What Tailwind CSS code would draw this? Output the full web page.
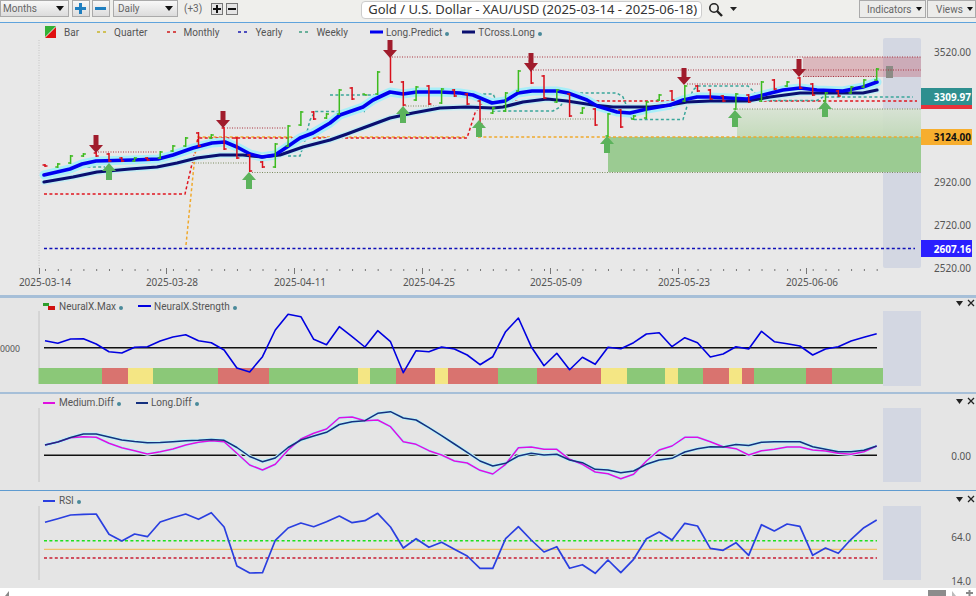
<!DOCTYPE html>
<html lang="en">
<head>
    <meta charset="UTF-8">
    <title>Gold / U.S. Dollar - XAU/USD</title>
    <script src="https://cdn.jsdelivr.net/npm/@tailwindcss/browser@4"></script>
</head>
<body class="w-[976px] h-[596px] overflow-hidden bg-white flex flex-col font-['Roboto',sans-serif] text-[10px] text-[#555]">

    <!-- toolbar -->
    <div class="h-[23px] shrink-0 flex items-start bg-[#efefec] border-b border-[#5fa3dc] text-[#666]">
        <div class="w-[69px] h-[17px] flex items-center justify-between pl-[2px] pr-[4px] border border-[#aaa] bg-linear-to-b from-[#f8f8f8] to-[#dcdcdc]">
            Months
            <svg width="8" height="5"><polygon points="0,0 8,0 4,5" fill="#111"/></svg>
        </div>
        <div class="w-[18px] h-[17px] ml-[3px] flex items-center justify-center border border-[#aaa] bg-linear-to-b from-[#f8f8f8] to-[#dcdcdc]">
            <svg width="11" height="11"><path d="M5.5 0V11M0 5.5H11" stroke="#1f7fc0" stroke-width="3"/></svg>
        </div>
        <div class="w-[18px] h-[17px] ml-[2px] flex items-center justify-center border border-[#aaa] bg-linear-to-b from-[#f8f8f8] to-[#dcdcdc]">
            <svg width="11" height="11"><path d="M0 5.5H11" stroke="#1f7fc0" stroke-width="3"/></svg>
        </div>
        <div class="w-[65px] h-[17px] ml-[3px] flex items-center justify-between pl-[4px] pr-[4px] border border-[#aaa] bg-linear-to-b from-[#f8f8f8] to-[#dcdcdc]">
            Daily
            <svg width="8" height="5"><polygon points="0,0 8,0 4,5" fill="#111"/></svg>
        </div>
        <span class="ml-[6px] h-[17px] leading-[17px]">(+3)</span>
        <div class="w-[12px] h-[12px] ml-[9px] mt-[3px] flex items-center justify-center border border-[#777] bg-[#e4e4e4]">
            <svg width="8" height="8"><path d="M4 0V8M0 4H8" stroke="#111" stroke-width="2"/></svg>
        </div>
        <div class="w-[12px] h-[12px] ml-[3px] mt-[3px] flex items-center justify-center border border-[#777] bg-[#e4e4e4]">
            <svg width="8" height="8"><path d="M0 4H8" stroke="#111" stroke-width="2"/></svg>
        </div>
        <div class="w-[341px] h-[18px] ml-[123px] mt-px flex items-center pl-[6px] rounded-sm border border-[#ccc] bg-white font-['Noto_Sans',sans-serif] text-[13px] text-[#333] whitespace-nowrap">Gold / U.S. Dollar - XAU/USD (2025-03-14 - 2025-06-18)</div>
        <svg class="ml-[6px] mt-[2px]" width="15" height="15" viewBox="0 0 15 15"><circle cx="6" cy="6" r="4.2" fill="none" stroke="#222" stroke-width="1.6"/><path d="M9 9L14 14" stroke="#222" stroke-width="2.4"/></svg>
        <svg class="ml-[7px] mt-[7px]" width="7" height="4"><polygon points="0,0 7,0 3.5,4" fill="#222"/></svg>
        <div class="w-[67px] h-[18px] ml-[122px] flex items-center justify-between pl-[7px] pr-[3px] border border-[#aaa] bg-[#ececea]">
            Indicators
            <svg width="6" height="4"><polygon points="0,0 6,0 3,4" fill="#111"/></svg>
        </div>
        <div class="w-[49px] h-[18px] ml-px flex items-center justify-between pl-[8px] pr-[2px] border border-[#aaa] bg-[#ececea]">
            Views
            <svg width="6" height="4"><polygon points="0,0 6,0 3,4" fill="#111"/></svg>
        </div>
    </div>

    <!-- price pane -->
    <div class="relative h-[275px] shrink-0 bg-[#e8e8e8] border-b-[3px] border-[#a6bfd8]">
        <div class="absolute left-[45px] top-[2px] h-[14px] flex items-center whitespace-nowrap">
            <svg width="12" height="12"><polygon points="0,0 11,0 0,11" fill="#35b035"/><polygon points="11,1 11,12 0,12" fill="#e01010"/></svg>
            <span class="ml-[7px]">Bar</span>
            <svg class="ml-[18px]" width="11" height="2"><path d="M0 1H11" stroke="#c8b428" stroke-width="1.5" stroke-dasharray="3 3"/></svg>
            <span class="ml-[6px]">Quarter</span>
            <svg class="ml-[19px]" width="11" height="2"><path d="M0 1H11" stroke="#d01818" stroke-width="1.5" stroke-dasharray="3 3"/></svg>
            <span class="ml-[6px]">Monthly</span>
            <svg class="ml-[19px]" width="11" height="2"><path d="M0 1H11" stroke="#1818b0" stroke-width="1.5" stroke-dasharray="3 3"/></svg>
            <span class="ml-[6px]">Yearly</span>
            <svg class="ml-[17px]" width="11" height="2"><path d="M0 1H11" stroke="#3f9d80" stroke-width="1.5" stroke-dasharray="3 3"/></svg>
            <span class="ml-[6px]">Weekly</span>
            <svg class="ml-[22px]" width="13" height="4"><path d="M0 2H13" stroke="#0000f0" stroke-width="3"/></svg>
            <span class="ml-[3px]">Long.Predict</span>
            <span class="ml-[3px] mt-[3px] w-[4px] h-[4px] rounded-full bg-[#4a8a9a]"></span>
            <svg class="ml-[13px]" width="13" height="4"><path d="M0 2H13" stroke="#0a0f70" stroke-width="3"/></svg>
            <span class="ml-[3px]">TCross.Long</span>
            <span class="ml-[3px] mt-[3px] w-[4px] h-[4px] rounded-full bg-[#4a8a9a]"></span>
        </div>
        <svg id="price" class="block font-['Noto_Sans',sans-serif]" width="976" height="272" viewBox="0 23 976 272">
            <defs>
                <linearGradient id="fade" x1="0" y1="0" x2="0" y2="1">
                    <stop offset="0" stop-color="#d7e3d2"/>
                    <stop offset="1" stop-color="#c0d9b6"/>
                </linearGradient>
            </defs>
            <rect x="883" y="38" width="38" height="230" rx="2" fill="#d3d7e2"/>
            <rect x="803" y="57" width="118" height="20" fill="#b8283c" fill-opacity=".25"/>
            <rect x="737" y="109" width="184" height="28" fill="url(#fade)" fill-opacity=".9"/>
            <rect x="608" y="137" width="313" height="35" fill="#9bcb92"/>
            <rect x="886" y="66" width="7" height="12" fill="#8b8b85"/>
            <path d="M39 40V270" stroke="#c4c4c4" stroke-dasharray="1 1.5"/>

            <!-- pivots -->
            <g fill="none" stroke="#a8333f" stroke-dasharray="1 1.5">
                <path d="M98 152H158M227 128H287M392 57H921M533 70H921M687 84H760M803 76.500H877"/>
            </g>
            <g fill="none" stroke="#7c8c60" stroke-dasharray="1 1.5">
                <path d="M193 163H247M252 172.500H921M403 106H463M480 119H597M737 109H921"/>
            </g>

            <!-- levels -->
            <g fill="none" stroke-width="1.5" stroke-dasharray="3 2.400">
                <path d="M186 245L195 155L198 137H467M478 137H919" stroke="#f0a92c"/>
                <path d="M44 194H185L198 138H467L475 113L484 101H917" stroke="#e0141e"/>
                <path d="M44 248.500H915" stroke="#1010b8"/>
                <path d="M82 167H105M288 156H300L305 140L310 120L315 111.500H365M330 95H375M467 94H493L496 100L493 111H553L560 107L568 93H617L623 97L632 119.500H683L688 103L693 90L698 86H748L755 93L763 100.500H817L823 97H913" stroke="#3aa69a"/>
            </g>

            <g id="lines" fill="none" stroke-linejoin="round" stroke-linecap="round"></g>
            <g id="bars" fill="none" stroke-width="1.500"></g>

            <!-- signal arrows -->
            <g fill="#a01c2c">
                <polygon points="93.500,135 98.500,135 98.500,145 103,145 96,153 89,145 93.500,145"/>
                <polygon points="220.500,111 225.500,111 225.500,120 230,120 223,128 216,120 220.500,120"/>
                <polygon points="387.500,40 392.500,40 392.500,50 397,50 390,58 383,50 387.500,50"/>
                <polygon points="528.500,53 533.500,53 533.500,63 538,63 531,72 524,63 528.500,63"/>
                <polygon points="681.500,68 686.500,68 686.500,77 691,77 684,85 677,77 681.500,77"/>
                <polygon points="796.500,59 801.500,59 801.500,69 806,69 799,77 792,69 796.500,69"/>
            </g>
            <g fill="#5cb35c">
                <polygon points="109,163 116,171 112,171 112,180 106,180 106,171 102,171"/>
                <polygon points="249,172 256,180 252,180 252,189 246,189 246,180 242,180"/>
                <polygon points="403,106 410,114 406,114 406,123 400,123 400,114 396,114"/>
                <polygon points="479,120 486,128 482,128 482,137 476,137 476,128 472,128"/>
                <polygon points="607,136 614,144 610,144 610,153 604,153 604,144 600,144"/>
                <polygon points="735,110 742,118 738,118 738,127 732,127 732,118 728,118"/>
                <polygon points="825,101 832,109 828,109 828,117 822,117 822,109 818,109"/>
            </g>

            <!-- axes -->
            <g id="ticks" fill="#777"></g>
            <g font-size="10" fill="#555" text-anchor="middle">
                <text x="45" y="286">2025-03-14</text>
                <text x="172" y="286">2025-03-28</text>
                <text x="300" y="286">2025-04-11</text>
                <text x="429" y="286">2025-04-25</text>
                <text x="556" y="286">2025-05-09</text>
                <text x="684" y="286">2025-05-23</text>
                <text x="812" y="286">2025-06-06</text>
            </g>
            <rect x="921" y="88" width="51" height="17" fill="#2e8f8f"/>
            <rect x="921" y="105" width="51" height="4" fill="#e8333b"/>
            <rect x="921" y="129" width="51" height="16" fill="#f7ae2e"/>
            <rect x="921" y="240" width="51" height="17" fill="#2a1fff"/>
            <g font-size="10" fill="#555" text-anchor="end">
                <text x="971" y="56">3520.00</text>
                <text x="971" y="186">2920.00</text>
                <text x="971" y="229">2720.00</text>
                <text x="971" y="272">2520.00</text>
                <text x="971" y="101" fill="#fff" font-weight="700">3309.97</text>
                <text x="971" y="141" fill="#111" font-weight="700">3124.00</text>
                <text x="971" y="253" fill="#fff" font-weight="700">2607.16</text>
            </g>
        </svg>
    </div>

    <!-- NeuralX pane -->
    <div class="relative h-[96px] shrink-0 bg-[#e5e5e5] border-b-[2px] border-[#a6bfd8]">
        <div class="absolute left-[43px] top-px h-[14px] flex items-center whitespace-nowrap">
            <svg width="12" height="7"><rect y="0" width="6" height="3" fill="#2e9e2e"/><rect x="5" y="3" width="7" height="4" fill="#d01010"/></svg>
            <span class="ml-[4px]">NeuralX.Max</span>
            <span class="ml-[3px] mt-[3px] w-[4px] h-[4px] rounded-full bg-[#4a8a9a]"></span>
            <svg class="ml-[15px]" width="13" height="2"><path d="M0 1H13" stroke="#0000e0" stroke-width="2"/></svg>
            <span class="ml-[3px]">NeuralX.Strength</span>
            <span class="ml-[3px] mt-[3px] w-[4px] h-[4px] rounded-full bg-[#4a8a9a]"></span>
        </div>
        <div class="absolute right-[1px] top-[1px] flex items-center gap-[4px]">
            <svg width="7" height="5"><polygon points="0,0 7,0 3.500,5" fill="#222"/></svg>
            <svg width="8" height="8"><path d="M1 1L7 7M7 1L1 7" stroke="#222" stroke-width="1.300"/></svg>
        </div>
        <svg id="neural" class="block font-['Noto_Sans',sans-serif]" width="976" height="94" viewBox="0 298 976 94">
            <rect x="883" y="311" width="38" height="75" fill="#d3d7e2"/>
            <path d="M39 311V368" stroke="#c4c4c4"/>
            <g id="band"></g>
            <path d="M44 347.700H877" stroke="#111" stroke-width="1.500"/>
            <g id="neuralLine" fill="none"></g>
            <text x="20" y="351.500" font-size="8.700" fill="#555" text-anchor="end">0000</text>
        </svg>
    </div>

    <!-- Diff pane -->
    <div class="relative h-[97px] shrink-0 bg-[#e5e5e5] border-b border-[#5f9bd0]">
        <div class="absolute left-[43px] top-px h-[15px] flex items-center whitespace-nowrap">
            <svg width="12" height="2"><path d="M0 1H12" stroke="#e010e0" stroke-width="2"/></svg>
            <span class="ml-[4px]">Medium.Diff</span>
            <span class="ml-[3px] mt-[3px] w-[4px] h-[4px] rounded-full bg-[#4a8a9a]"></span>
            <svg class="ml-[15px]" width="12" height="2"><path d="M0 1H12" stroke="#15307f" stroke-width="2"/></svg>
            <span class="ml-[3px]">Long.Diff</span>
            <span class="ml-[3px] mt-[3px] w-[4px] h-[4px] rounded-full bg-[#4a8a9a]"></span>
        </div>
        <div class="absolute right-[1px] top-[3px] flex items-center gap-[4px]">
            <svg width="7" height="5"><polygon points="0,0 7,0 3.500,5" fill="#222"/></svg>
            <svg width="8" height="8"><path d="M1 1L7 7M7 1L1 7" stroke="#222" stroke-width="1.300"/></svg>
        </div>
        <svg id="diff" class="block font-['Noto_Sans',sans-serif]" width="976" height="96" viewBox="0 394 976 96">
            <rect x="883" y="408" width="38" height="74" fill="#d3d7e2"/>
            <path d="M39 408V482" stroke="#c4c4c4"/>
            <path d="M44 455.300H877" stroke="#111" stroke-width="1.500"/>
            <g id="diffLines" fill="none"></g>
            <text x="971" y="460" font-size="10" fill="#555" text-anchor="end">0.00</text>
        </svg>
    </div>

    <!-- RSI pane -->
    <div class="relative h-[97px] shrink-0 bg-[#e5e5e5]">
        <div class="absolute left-[43px] top-[2px] h-[15px] flex items-center whitespace-nowrap">
            <svg width="12" height="2"><path d="M0 1H12" stroke="#2a3fe0" stroke-width="2"/></svg>
            <span class="ml-[4px]">RSI</span>
            <span class="ml-[3px] mt-[3px] w-[4px] h-[4px] rounded-full bg-[#4a8a9a]"></span>
        </div>
        <div class="absolute right-[1px] top-[4px] flex items-center gap-[4px]">
            <svg width="7" height="5"><polygon points="0,0 7,0 3.500,5" fill="#222"/></svg>
            <svg width="8" height="8"><path d="M1 1L7 7M7 1L1 7" stroke="#222" stroke-width="1.300"/></svg>
        </div>
        <svg id="rsi" class="block font-['Noto_Sans',sans-serif]" width="976" height="97" viewBox="0 491 976 97">
            <rect x="883" y="506" width="38" height="74" fill="#d3d7e2"/>
            <path d="M39 506V580" stroke="#c4c4c4"/>
            <path d="M44 540.700H877" stroke="#1fe01f" stroke-width="1.500" stroke-dasharray="3 2.400"/>
            <path d="M44 549.300H877" stroke="#f2b84a"/>
            <path d="M44 558H877" stroke="#c81e32" stroke-width="1.500" stroke-dasharray="3 2.400"/>
            <g id="rsiLine" fill="none"></g>
            <g font-size="10" fill="#555" text-anchor="end">
                <text x="971" y="541">64.0</text>
                <text x="971" y="585">14.0</text>
            </g>
        </svg>
    </div>

    <!-- scroll bar -->
    <div class="h-[8px] shrink-0 bg-white flex items-end pl-[5px] pr-[3px]">
        <svg width="4" height="5"><polygon points="4,0 4,5 0,5" fill="#888"/></svg>
        <div class="w-[18px] h-[6px] ml-[919px] bg-[#8c8c8c]"></div>
        <svg class="ml-[6px]" width="4" height="5"><polygon points="0,0 4,5 0,5" fill="#bbb"/></svg>
        <svg class="ml-[10px]" width="7" height="6"><path d="M3.500 0V6M0 3H7" stroke="#888" stroke-width="2"/></svg>
    </div>

    <script>
        const NS = "http://www.w3.org/2000/svg";
        const xAt = i => 45 + 12.795 * i;

        function add(parent, tag, attrs) {
            const el = document.createElementNS(NS, tag);
            for (const k in attrs) el.setAttribute(k, attrs[k]);
            parent.appendChild(el);
        }

        // series given per bar
        function series(parent, ys, stroke, width) {
            const pts = ys.map((y, i) => xAt(i).toFixed(1) + "," + y).join(" ");
            add(parent, "polyline", { points: pts, stroke: stroke, "stroke-width": width, "stroke-linejoin": "round" });
        }

        // [top, bottom, up?]
        const bars = [
            [164,167,0],[163,168,1],[155,164,1],[153,157,1],[152,157,0],[153,162,0],[157,162,0],[157,162,1],[157,161,0],[151,159,1],
            [145,152,1],[137,147,1],[132,147,0],[134,139,1],[127,150,0],[137,159,0],[154,172,0],[161,168,0],[143,168,1],[125,147,1],
            [111,126,1],[111,120,0],[113,119,1],[89,115,1],[87,100,0],[94,95,1],[71,95,1],[50,83,0],[81,106,0],[86,101,1],
            [85,105,0],[88,104,1],[89,97,0],[93,105,0],[100,125,0],[107,114,1],[92,112,1],[70,92,1],[60,84,0],[75,99,0],
            [89,103,1],[93,117,0],[107,114,1],[108,126,0],[113,137,1],[109,128,0],[115,120,1],[101,119,1],[94,101,1],[90,101,0],
            [85,102,1],[85,92,0],[89,100,0],[95,102,0],[93,110,1],[94,103,0],[81,102,1],[79,90,0],[81,87,1],[77,89,0],
            [83,96,0],[92,102,1],[90,97,0],[86,94,1],[79,88,1],[68,81,1]
        ];
        const barsG = document.getElementById("bars");
        bars.forEach((b, i) => {
            const x = xAt(i).toFixed(1);
            const open = b[2] ? b[1] - 1 : b[0] + 1;
            const close = b[2] ? b[0] + 1 : b[1] - 1;
            const d = `M${x} ${b[0]}V${b[1]}M${x - 2.5} ${open}H${x}M${x} ${close}H${+x + 2.5}`;
            add(barsG, "path", { d: d, stroke: b[2] ? "#3dbb1e" : "#d8101c" });
        });

        const linesG = document.getElementById("lines");
        const predict = "44,175 57,172 70,169 82,164 96,161 133,160 158,159 173,155 193,148 212,143 225,142 237,147 250,154 262,157 275,155 287,147 300,138 313,133 330,123 340,115 363,107 373,100 390,92 403,94 417,92 440,92 460,93 473,95 492,103 505,101 518,93 532,91 557,91 568,93 587,100 597,106 617,112 630,113 647,109 670,105 683,100 697,97 710,97 747,99 763,95 783,90 800,88 817,90 843,91 863,87 877,82";
        const cross = "44,182 73,177 97,172 130,169 157,167 177,163 197,158 220,155 243,155 262,157 280,155 303,147 330,140 347,134 363,128 390,118 413,113 440,108 467,107 493,108 503,107 523,102 547,99 567,101 593,105 613,107 630,107 650,107 670,105 687,102 710,101 747,101 770,97 800,93 843,93 863,93 877,90";
        add(linesG, "polyline", { points: predict, stroke: "#a8eef8", "stroke-width": 9 });
        add(linesG, "polyline", { points: cross, stroke: "#c4eef4", "stroke-width": 6 });
        add(linesG, "polyline", { points: cross, stroke: "#0a0f70", "stroke-width": 3.2 });
        add(linesG, "polyline", { points: predict, stroke: "#0000f0", "stroke-width": 3.6 });

        // colour band under the strength line
        const band = [
            [38.5,102,"g"],[102,128,"r"],[128,153,"y"],[153,218,"g"],[218,269,"r"],[269,358,"g"],[358,370,"y"],[370,396,"g"],
            [396,435,"r"],[435,448,"y"],[448,498,"r"],[498,537,"g"],[537,601,"r"],[601,627,"y"],[627,665,"g"],[665,678,"y"],
            [678,703,"g"],[703,729,"r"],[729,742,"y"],[742,754,"r"],[754,806,"g"],[806,832,"r"],[832,883,"g"]
        ];
        const bandColor = { g: "#8bc878", r: "#d9736f", y: "#f4e684" };
        band.forEach(s => add(document.getElementById("band"), "rect", { x: s[0], y: 368, width: s[1] - s[0], height: 16, fill: bandColor[s[2]] }));

        const neural = [340.7,343.3,339,338.7,344,351.7,353,347.3,346.7,341,337,334.7,340.7,342.7,350,368,372,356.7,330,314.3,316.7,339.3,344.7,326.7,336.7,347,330.7,341.7,372.7,350.7,351.7,347,349,355,364.7,356.7,331.7,318,346.7,365.7,353.3,369.7,357.3,364.3,347.3,348.7,342.7,334,332.7,346.7,337.7,342.7,357,354,346.7,349,331.3,341.7,343.7,346,355,349,346.7,341,337.3,333.7];
        series(document.getElementById("neuralLine"), neural, "#0000e0", 1.6);

        const medium = [445,442,437.7,436.7,437.3,443.3,447.7,450.7,454,451.7,449,445,442.3,440.7,441.7,453.3,465,470,464.3,450,439,433.3,429,417.7,417,420.7,420,426.7,441.7,444.3,450.7,455,461,463,470.3,474,464.3,447.7,447,449.3,449.3,459.3,464.3,472,473.7,478.7,474.3,461,450,446,437.3,437.3,441.7,446.7,448.7,455,450.7,449.3,447,447,450,451,453.3,454.3,451.7,446];
        const longDiff = [445,442,437.5,434,434,437,440,441.5,442.7,442.5,441.7,440.7,440.3,439.5,440.3,447.5,456.5,461.7,458,447.5,440,436,432.3,424.5,421.7,420.7,413.3,411.7,418,420,427.7,435.7,444,452.3,461,466,463.3,456,453.3,455,454.3,460,462.7,469.3,470,472.7,471,464.3,460,458.3,452,448.7,446.7,447,444.5,445.5,442.3,441.7,441.7,441.7,446.7,449.3,451.7,451.7,450.3,446];
        const diffG = document.getElementById("diffLines");
        series(diffG, medium, "#bff2f8", 3.5);
        series(diffG, longDiff, "#bff2f8", 3.5);
        series(diffG, medium, "#e010e0", 1.5);
        series(diffG, longDiff, "#15307f", 1.5);

        const rsi = [522.3,518.7,515,514.3,514,534.3,541,534,536.7,522,517.7,514,519.3,512.7,527,566,573,572.7,540.3,528,523,526.7,521.7,516,522.7,520.7,513.3,527,548,538.7,547.3,542.3,549.3,556,568.3,568.3,538.7,526.7,540,552,546.7,568.3,564.7,573.3,560,572.7,559.3,538.7,532,540,523.3,526,548.3,550.3,542.7,555.3,524.7,531,524,526.3,555.3,548,553.3,539.3,527.7,520];
        series(document.getElementById("rsiLine"), rsi, "#2a3fe0", 1.7);

        // time axis ticks
        const ticks = document.getElementById("ticks");
        for (let i = 0; i < 66; i++) add(ticks, "rect", { x: xAt(i), y: 269, width: 1, height: 2 });
        [39, 166, 294, 422, 550, 678, 806].forEach(x => add(ticks, "rect", { x: x, y: 268, width: 1, height: 6 }));
    </script>
</body>
</html>
